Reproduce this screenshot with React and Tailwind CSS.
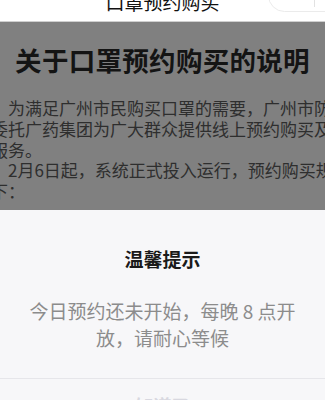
import React from 'react'

const cjk = { fontFamily: '"Noto Sans CJK SC", "Noto Sans", sans-serif' }

const bodyLines = [
  { text: '为满足广州市民购买口罩的需要，广州市防', indent: true },
  { text: '委托广药集团为广大群众提供线上预约购买及', indent: false },
  { text: '服务。', indent: false },
  { text: '2月6日起，系统正式投入运行，预约购买规', indent: true },
  { text: '下：', indent: false },
]

const App = () => {
  return (
    <div className="w-[325px] h-[400px] overflow-hidden relative bg-[#808080]" style={cjk}>
      {/* Nav bar */}
      <div className="h-[22px] bg-white border-b border-[#cfcfcf] relative flex justify-center overflow-hidden">
        <span className="text-[19px] leading-[20px] mt-[-8px] text-[#111]">口罩预约购买</span>
        {/* capsule */}
        <div className="absolute left-[268px] top-[-21px] w-[96px] h-[33px] rounded-full border border-[#ebebeb] bg-white flex items-center">
          <div className="w-[45px] flex justify-center gap-[3px] mt-[-6px]">
            <span className="w-[3px] h-[3px] rounded-full bg-[#ddd]" />
            <span className="w-[3px] h-[3px] rounded-full bg-[#ddd]" />
            <span className="w-[3px] h-[3px] rounded-full bg-[#ddd]" />
          </div>
          <div className="w-px h-[18px] bg-[#e2e2e2] mt-[4px]" />
        </div>
      </div>

      {/* Page content under the mask */}
      <div className="h-[188px] overflow-hidden pt-[22px]">
        <h1 className="text-[26.5px] leading-[32px] font-bold text-[#141414] text-center tracking-[0.3px]">
          关于口罩预约购买的说明
        </h1>
        <div className="mt-[22px] text-[17px] leading-[20.8px] text-[#2e2e2e]">
          {bodyLines.map((l, i) => (
            <div
              key={i}
              className={`whitespace-nowrap ${l.indent ? 'pl-[8px]' : 'ml-[-9px]'}`}
            >
              {l.text}
            </div>
          ))}
        </div>
      </div>

      {/* Dialog */}
      <div className="h-[190px] bg-[#f7f7f9] flex flex-col items-center">
        <div className="pt-[36px] text-[19px] leading-[26px] font-bold text-[#1a1a1a]">温馨提示</div>
        <p className="mt-[25px] w-[280px] text-center text-[19px] leading-[27px] text-[#8c8c8c]">
          今日预约还未开始，每晚 8 点开放，请耐心等候
        </p>
        <div className="mt-[27px] w-full h-[3px] bg-[#f1f1f4]" />
        <div className="w-full border-t border-[#e6e6ea] flex justify-center">
          <span className="text-[18px] leading-[24px] mt-[14px] text-[#d8d8e0] font-bold">知道了</span>
        </div>
      </div>
    </div>
  )
}

export default App
